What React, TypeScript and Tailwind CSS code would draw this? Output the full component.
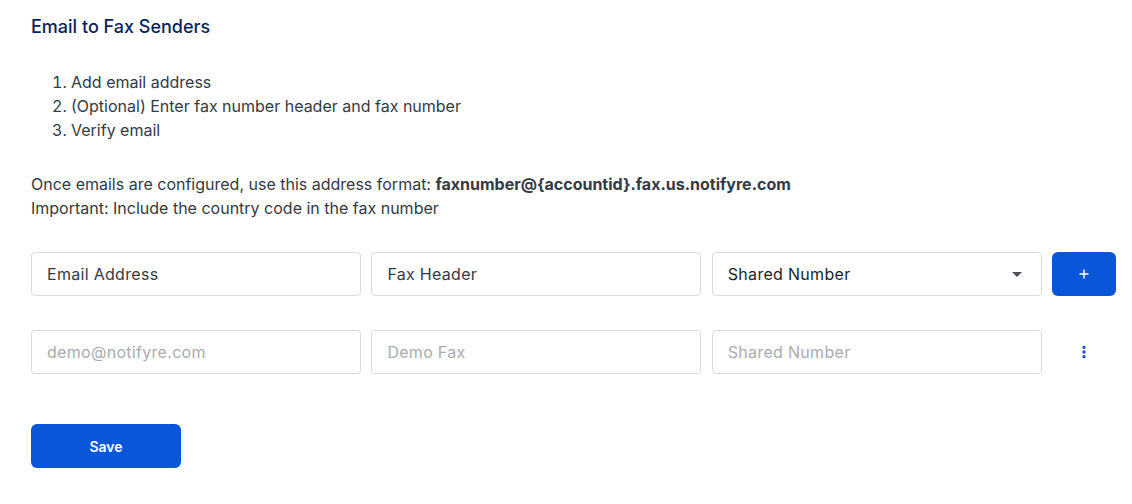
import { Plus, EllipsisVertical } from "lucide-react";

const fieldBase =
  "h-[44px] rounded-[4px] border border-[#dcdcdc] bg-white px-[15px] flex items-center text-[16px] tracking-[0.3px]";

export default function App() {
  return (
    <div
      className="min-h-screen w-full bg-white pl-[31px] pt-[16px] text-[#333a45]"
      style={{ fontFamily: "Inter, 'Noto Sans', sans-serif" }}
    >
      <h1 className="text-[18px] font-medium leading-[22px] text-[#0a1f5e]">Email to Fax Senders</h1>

      <ol className="mt-[32px] list-decimal pl-[40px] text-[16px] leading-[24px]">
        <li>Add email address</li>
        <li>(Optional) Enter fax number header and fax number</li>
        <li>Verify email</li>
      </ol>

      <div className="mt-[30px] text-[16px] leading-[24px]">
        <p>
          Once emails are configured, use this address format:{" "}
          <span className="font-bold">faxnumber@{"{accountid}"}.fax.us.notifyre.com</span>
        </p>
        <p>Important: Include the country code in the fax number</p>
      </div>

      <div className="mt-[32px] grid grid-cols-[330px_330px_330px_64px] gap-x-[10.4px] gap-y-[34px]">
        <div className={fieldBase}>Email Address</div>
        <div className={fieldBase}>Fax Header</div>
        <div className={`${fieldBase} justify-between text-[#1a1f29]`}>
          <span>Shared Number</span>
          <svg width="10" height="5" viewBox="0 0 10 5" className="mr-[4px]">
            <path d="M0 0h10L5 5z" fill="#4b4f58" />
          </svg>
        </div>
        <button className="flex h-[44px] items-center justify-center rounded-[6px] bg-[#0a56d9] text-white">
          <Plus size={14} strokeWidth={2.5} />
        </button>

        <div className={`${fieldBase} text-[#a9acb2]`}>demo@notifyre.com</div>
        <div className={`${fieldBase} text-[#a9acb2]`}>Demo Fax</div>
        <div className={`${fieldBase} text-[#a9acb2]`}>Shared Number</div>
        <div className="flex items-center justify-center text-[#1549c0]">
          <EllipsisVertical size={16} strokeWidth={3} />
        </div>
      </div>

      <button className="mt-[50px] h-[44px] w-[150px] rounded-[6px] bg-[#0a56d9] text-[14px] font-semibold text-white">
        Save
      </button>
    </div>
  );
}
